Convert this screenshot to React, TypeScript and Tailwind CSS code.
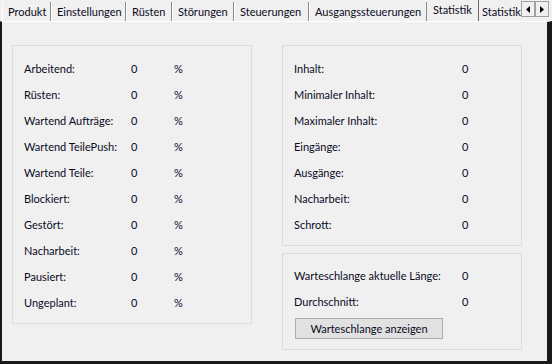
import React from "react";

const tabs = [
  { label: "Produkt", w: "w-[49px]" },
  { label: "Einstellungen", w: "w-[75px]" },
  { label: "Rüsten", w: "w-[46px]" },
  { label: "Störungen", w: "w-[62px]" },
  { label: "Steuerungen", w: "w-[75px]" },
  { label: "Ausgangssteuerungen", w: "w-[118px]" },
];

const leftRows = [
  "Arbeitend:",
  "Rüsten:",
  "Wartend Aufträge:",
  "Wartend TeilePush:",
  "Wartend Teile:",
  "Blockiert:",
  "Gestört:",
  "Nacharbeit:",
  "Pausiert:",
  "Ungeplant:",
];

const rightRows = [
  "Inhalt:",
  "Minimaler Inhalt:",
  "Maximaler Inhalt:",
  "Eingänge:",
  "Ausgänge:",
  "Nacharbeit:",
  "Schrott:",
];

function Arrow({ dir }: { dir: "l" | "r" }) {
  return (
    <div className="flex h-[16px] w-[14px] items-center justify-center border border-[#a0a0a0] bg-[#f0f0f0]">
      <svg width="4" height="7" viewBox="0 0 4 7">
        {dir === "l" ? <path d="M4 0 L0 3.5 L4 7 Z" fill="#000" /> : <path d="M0 0 L4 3.5 L0 7 Z" fill="#000" />}
      </svg>
    </div>
  );
}

export default function App() {
  return (
    <div className="flex h-[364px] w-[552px] flex-col bg-[#f0f0f0] font-['Lato',sans-serif] text-[11px] text-[#0a0a1e]">
      {/* tab strip */}
      <div className="flex h-[21px] items-end">
        <div className="w-[2px]" />
        {tabs.map((t) => (
          <div
            key={t.label}
            className={`${t.w} flex h-[19px] shrink-0 items-center border-r border-r-[#8a8a8a] border-l border-l-white pl-[5px] leading-none`}
          >
            {t.label}
          </div>
        ))}
        <div className="flex h-[21px] w-[52px] shrink-0 items-start border-r border-r-[#696969] pt-[4px] pl-[6px] leading-none">
          Statistik
        </div>
        <div className="flex h-[19px] w-[42px] shrink-0 items-center overflow-hidden whitespace-nowrap pl-[3px] leading-none">
          Statistik
        </div>
        <div className="flex h-[21px] items-start pt-[1px]">
          <Arrow dir="l" />
          <Arrow dir="r" />
        </div>
      </div>

      {/* panel */}
      <div className="flex flex-1 border-t border-t-white border-l-2 border-l-[#1a1a1a] border-r-[5px] border-r-[#1a1a1a] border-b-[3px] border-b-[#1a1a1a]">
        <div className="flex flex-1 gap-[30px] pl-[10px] pt-[23px]">
          <div className="flex h-[279px] w-[240px] flex-col border border-[#dcdcdc] pl-[11px] pt-[10px]">
            {leftRows.map((r) => (
              <div key={r} className="flex h-[26px] items-center">
                <span className="w-[107px]">{r}</span>
                <span className="w-[43px]">0</span>
                <span>%</span>
              </div>
            ))}
          </div>
          <div className="flex flex-col gap-[7px]">
            <div className="flex h-[201px] w-[240px] flex-col border border-[#dcdcdc] pl-[11px] pt-[10px]">
              {rightRows.map((r) => (
                <div key={r} className="flex h-[26px] items-center">
                  <span className="w-[168px]">{r}</span>
                  <span>0</span>
                </div>
              ))}
            </div>
            <div className="flex h-[97px] w-[240px] flex-col border border-[#dcdcdc] pl-[11px] pt-[9px]">
              <div className="flex h-[26px] items-center">
                <span className="w-[168px]">Warteschlange aktuelle Länge:</span>
                <span>0</span>
              </div>
              <div className="flex h-[26px] items-center">
                <span className="w-[168px]">Durchschnitt:</span>
                <span>0</span>
              </div>
              <button className="mt-[3px] ml-[1px] flex h-[21px] w-[148px] items-center justify-center border border-[#adadad] bg-[#e1e1e1] leading-none">
                Warteschlange anzeigen
              </button>
            </div>
          </div>
        </div>
      </div>
    </div>
  );
}
